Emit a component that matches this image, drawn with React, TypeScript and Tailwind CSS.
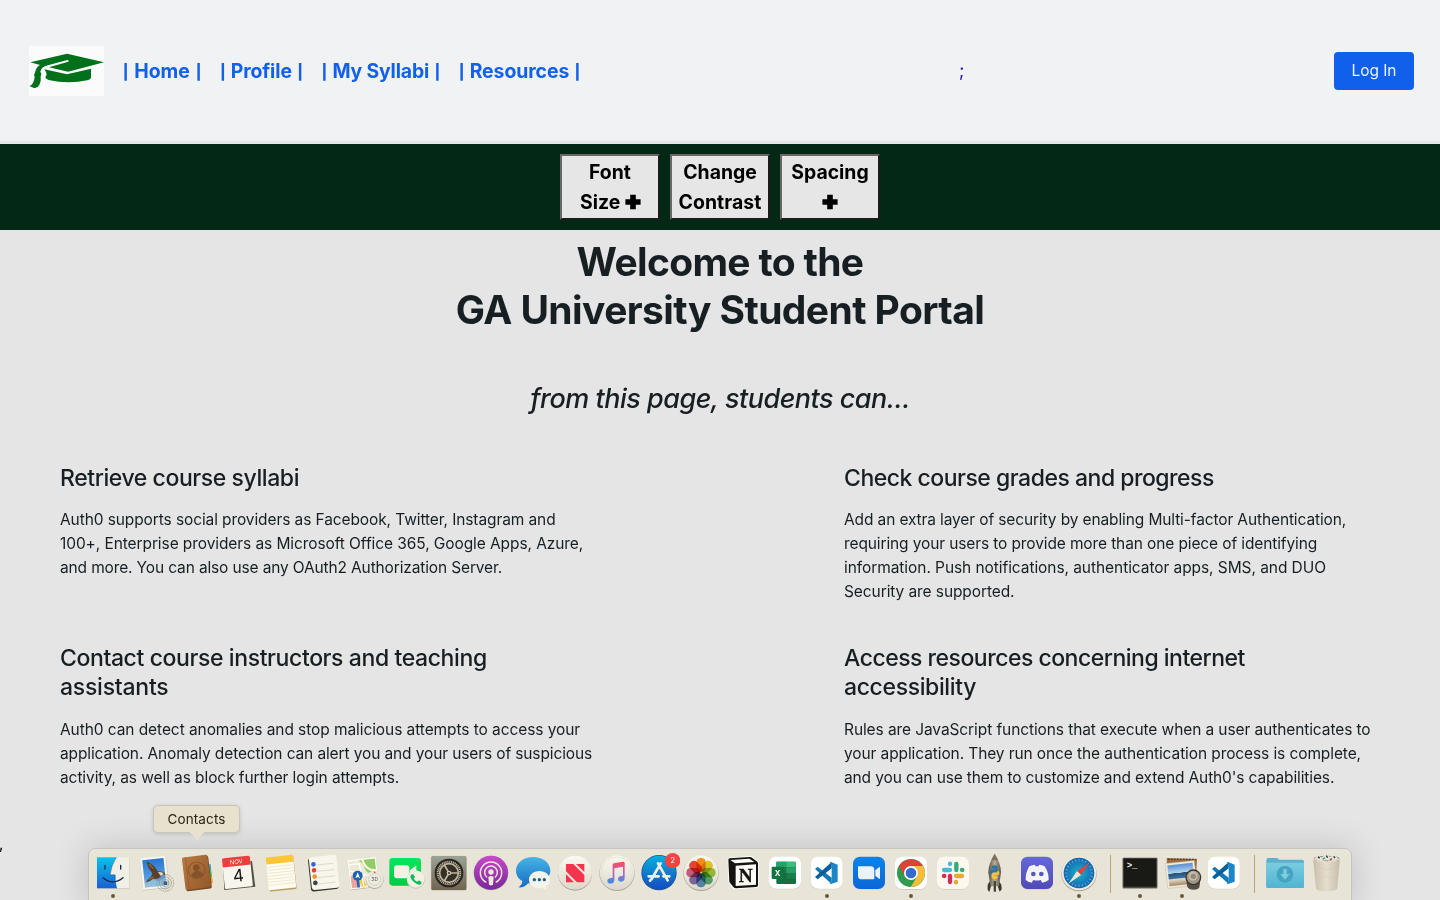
import type { ReactNode } from "react";

type Line = [text: string, tracking: string];

const links: [label: string, width: string, tracking: string][] = [
  ["Home", "w-[78px]", "tracking-[-0.05px]"],
  ["Profile", "w-[82.3px]", "tracking-[-0.12px]"],
  ["My Syllabi", "w-[118.2px]", "tracking-[-0.16px]"],
  ["Resources", "w-[120.8px]", "tracking-[-0.06px]"],
];

const features: { title: Line[]; body: Line[] }[] = [
  {
    title: [["Retrieve course syllabi", "tracking-[-0.42px]"]],
    body: [
      ["Auth0 supports social providers as Facebook, Twitter, Instagram and", "tracking-[-0.1px]"],
      ["100+, Enterprise providers as Microsoft Office 365, Google Apps, Azure,", "tracking-[-0.088px]"],
      ["and more. You can also use any OAuth2 Authorization Server.", "tracking-[-0.14px]"],
    ],
  },
  {
    title: [["Check course grades and progress", "tracking-[-0.49px]"]],
    body: [
      ["Add an extra layer of security by enabling Multi-factor Authentication,", "tracking-[-0.122px]"],
      ["requiring your users to provide more than one piece of identifying", "tracking-[-0.118px]"],
      ["information. Push notifications, authenticator apps, SMS, and DUO", "tracking-[-0.068px]"],
      ["Security are supported.", "tracking-[-0.09px]"],
    ],
  },
  {
    title: [
      ["Contact course instructors and teaching", "tracking-[-0.395px]"],
      ["assistants", "tracking-[-0.24px]"],
    ],
    body: [
      ["Auth0 can detect anomalies and stop malicious attempts to access your", "tracking-[-0.077px]"],
      ["application. Anomaly detection can alert you and your users of suspicious", "tracking-[-0.118px]"],
      ["activity, as well as block further login attempts.", "tracking-[-0.085px]"],
    ],
  },
  {
    title: [
      ["Access resources concerning internet", "tracking-[-0.5px]"],
      ["accessibility", "tracking-[-0.37px]"],
    ],
    body: [
      ["Rules are JavaScript functions that execute when a user authenticates to", "tracking-[-0.093px]"],
      ["your application. They run once the authentication process is complete,", "tracking-[-0.1px]"],
      ["and you can use them to customize and extend Auth0's capabilities.", "tracking-[-0.128px]"],
    ],
  },
];

function Lines({ lines }: { lines: Line[] }) {
  return (
    <>
      {lines.map(([text, tracking]) => (
        <span key={text} className={`block whitespace-nowrap ${tracking}`}>
          {text}
        </span>
      ))}
    </>
  );
}

function Pipe() {
  return <span className="flex w-[5px] justify-center pt-[2px] text-[14.8px] leading-[30px] font-extrabold">|</span>;
}

function Logo() {
  return (
    <svg viewBox="87 48 225 150" className="h-[50px] w-[75px]">
      <rect x="87" y="48" width="225" height="150" fill="#fbfbfb" />
      <path d="M91 97 L201 71 L312 97 L204 125 L147 112 L205 95 Q208 90 202 90 L138 107 Q124 111 121 125 Q127 132 122 139 Q124 152 118 165 Q112 176 102 174 L88 168 Q102 163 104 140 Q100 134 105 128 Q108 111 120 105 Z" fill="#00701a" />
      <path d="M133 118 L201 133 L273 116 V142 Q273 148 262 151 Q203 163 146 150 Q137 147 136 142 L140 134 L138 126 Z" fill="#00701a" />
    </svg>
  );
}

function Plus() {
  return (
    <svg viewBox="0 0 16 16" className="inline-block h-4 w-4 align-[-1px]">
      <path d="M5.2 .7h5.600v4.500H15.600v5.600H10.800v4.500H5.200V10.800H.4V5.200H5.200Z" fill="#000" />
    </svg>
  );
}

function ToolButton({ children }: { children: ReactNode }) {
  return (
    <button className="h-[66px] w-[100px] border-2 border-t-[#6b6767] border-r-[#1c1c1c] border-b-[#1c1c1c] border-l-[#6b6767] bg-[#e6e6e6] text-center text-[19.4px] leading-[30px] font-bold text-black">
      {children}
    </button>
  );
}

function AppIcon({ box, children, running }: { box: string; children: ReactNode; running?: boolean }) {
  return (
    <div className="flex w-[42px] flex-col items-center">
      <svg viewBox={box} className="h-[42px] w-[42px]">
        {children}
      </svg>
      {running && <span className="h-1 w-1 rounded-full bg-[#6b5737]" />}
    </div>
  );
}

function VsCode({ x }: { x: number }) {
  return (
    <g transform={`translate(${x} 0)`}>
      <rect x="0" y="52" width="95" height="96" rx="21" fill="#d3cfc2" />
      <rect x="0" y="50" width="95" height="96" rx="21" fill="#fff" />
      <path d="M12 87 L20 80 L62 113 V132 Z" fill="#1479b8" />
      <path d="M12 111 L20 118 L62 85 V66 Z" fill="#07609c" />
      <path d="M60 66 L80 74 V125 L60 132 L55 129 Q62 130 62 122 V77 Q61 69 55 69 Z" fill="#1c85c6" />
    </g>
  );
}

const petals = ["#f9951f", "#e6cf2c", "#a3c840", "#5db27c", "#5f93c8", "#8a72b4", "#d0638c", "#ee4a38"];
const spokes = [0, 15, 30, 45, 60, 75, 90, 105, 120, 135, 150, 165, 180, 195, 210, 225, 240, 255, 270, 285, 300, 315, 330, 345];

function Defs() {
  return (
    <svg className="absolute h-0 w-0">
      <defs>
        <linearGradient id="finder" x1="0" y1="0" x2="0" y2="1"><stop stopColor="#08c4e8" /><stop offset="1" stopColor="#1b5fd6" /></linearGradient>
        <linearGradient id="sky" x1="0" y1="0" x2="0" y2="1"><stop stopColor="#2476d2" /><stop offset="1" stopColor="#71b0e6" /></linearGradient>
        <linearGradient id="leather" x1="0" y1="0" x2="1" y2="1"><stop stopColor="#b97a42" /><stop offset="1" stopColor="#93592b" /></linearGradient>
        <linearGradient id="green" x1="0" y1="0" x2="0" y2="1"><stop stopColor="#05e75f" /><stop offset="1" stopColor="#06c944" /></linearGradient>
        <linearGradient id="metal" x1="0" y1="0" x2="0" y2="1"><stop stopColor="#9ba296" /><stop offset="1" stopColor="#70644f" /></linearGradient>
        <linearGradient id="purple" x1="0" y1="0" x2="0" y2="1"><stop stopColor="#ca48cc" /><stop offset="1" stopColor="#79279a" /></linearGradient>
        <linearGradient id="bubble" x1="0" y1="0" x2="0" y2="1"><stop stopColor="#47b5e4" /><stop offset="1" stopColor="#146cc4" /></linearGradient>
        <linearGradient id="ivory" x1="0" y1="0" x2="0" y2="1"><stop stopColor="#fbf9f1" /><stop offset="1" stopColor="#ddd8ca" /></linearGradient>
        <linearGradient id="note" x1="0" y1="0" x2="0" y2="1"><stop stopColor="#ff4758" /><stop offset="0.45" stopColor="#c462b4" /><stop offset="1" stopColor="#3292ee" /></linearGradient>
        <linearGradient id="store" x1="0" y1="0" x2="0" y2="1"><stop stopColor="#06b1dd" /><stop offset="1" stopColor="#164bc1" /></linearGradient>
        <linearGradient id="zoom" x1="0" y1="0" x2="0" y2="1"><stop stopColor="#0a84ea" /><stop offset="1" stopColor="#0b67d9" /></linearGradient>
        <linearGradient id="discord" x1="0" y1="0" x2="0" y2="1"><stop stopColor="#6468d8" /><stop offset="1" stopColor="#504ab5" /></linearGradient>
        <radialGradient id="safari"><stop stopColor="#1bb4c5" /><stop offset="1" stopColor="#1265b4" /></radialGradient>
        <linearGradient id="rocket"><stop stopColor="#574f43" /><stop offset="0.5" stopColor="#b7ae9c" /><stop offset="1" stopColor="#5b5347" /></linearGradient>
        <linearGradient id="folder" x1="0" y1="0" x2="0" y2="1"><stop stopColor="#79cce0" /><stop offset="1" stopColor="#52b4d1" /></linearGradient>
        <linearGradient id="bin"><stop stopColor="#c9bfaa" /><stop offset="0.5" stopColor="#e5dece" /><stop offset="1" stopColor="#c7bda8" /></linearGradient>
        <linearGradient id="beach" x1="0" y1="0" x2="0" y2="1"><stop stopColor="#598ed0" /><stop offset="0.4" stopColor="#b4d5ed" /><stop offset="0.42" stopColor="#254f7c" /><stop offset="0.65" stopColor="#3f7195" /><stop offset="0.7" stopColor="#dfddd1" /><stop offset="1" stopColor="#a9835f" /></linearGradient>
      </defs>
    </svg>
  );
}

function Dock() {
  return (
    <div className="absolute top-[848px] left-[88px] flex h-[60px] w-[1264px] items-start rounded-[7px] border border-[#c5c5c4] bg-[#e8e5d8] px-[3px] pt-[3px] font-['Inter',sans-serif] shadow-[0_0_34px_rgba(0,0,0,0.17)]">
      <AppIcon box="36 171 126 126" running>
        <rect x="50" y="188" width="99" height="94" rx="3" fill="#c9c6b9" />
        <rect x="50" y="187" width="98" height="93" rx="2" fill="#f1f0e6" />
        <path d="M51 187 H109 Q94 210 90 239 H106 Q104 262 110 280 H51 Z" fill="url(#finder)" />
        <path d="M109 187 Q94 210 90 240 H105 Q104 262 110 280" fill="none" stroke="#174f86" strokeWidth="1.500" />
        <path d="M69 248 Q98 273 129 248" fill="none" stroke="#0b2c48" strokeWidth="4" strokeLinecap="round" />
        <path d="M75 211v11M122 211v11" stroke="#0b2c48" strokeWidth="4" strokeLinecap="round" />
      </AppIcon>

      <AppIcon box="162 171 126 126">
        <g transform="rotate(-6 223 235)">
          <rect x="184" y="187" width="79" height="96" fill="#bdb7a7" />
          <rect x="184" y="185" width="78" height="96" fill="#f7f5ec" stroke="#d5cfbe" strokeDasharray="3 3" />
          <rect x="191" y="192" width="64" height="82" fill="url(#sky)" />
          <path d="M191 258l22-9 20 12 22-10v23h-64Z" fill="#a9cbdc" opacity=".6" />
          <path d="M203 198l9 4 13 12 9 16 12 2 8 5 2 7-12-2-4 7-8 3-14-1-9 5-15 4 7-8 12-9 4-9-9-15Z" fill="#5a3f2a" />
          <path d="M234 232l12 2 5 7-10 3Z" fill="#e2dbc5" />
          <path d="M210 206l12 15M205 252l14-7" stroke="#a9723d" strokeWidth="3" />
        </g>
        <g fill="none" stroke="#8e8d85" strokeWidth="2.500" opacity=".85"><circle cx="256" cy="264" r="25" strokeDasharray="5 2" /><circle cx="256" cy="264" r="18" /><circle cx="256" cy="264" r="11" /></g>
        <path d="M251 259h11v11h-11Z" fill="#315c87" />
      </AppIcon>

      <AppIcon box="288 171 126 126">
        <path d="M382 209l10-2 2 20-10 2Z" fill="#3faab9" /><path d="M384 229l10-1 2 18-10 2Z" fill="#4db44a" /><path d="M386 248l11-1 1 17-10 4Z" fill="#f1992e" />
        <g transform="rotate(-7 350 233)">
          <rect x="313" y="187" width="77" height="98" rx="5" fill="#754620" />
          <rect x="311" y="183" width="77" height="98" rx="5" fill="url(#leather)" />
          <path d="M322 184v97" stroke="#8c552b" strokeWidth="2" />
          <g fill="none" stroke="#8a5729" strokeWidth="3"><circle cx="351" cy="226" r="25" /></g>
          <circle cx="351" cy="218" r="10" fill="#84522a" />
          <path d="M333 242q3-14 18-14t18 14q-18 14-36 0Z" fill="#84522a" />
        </g>
      </AppIcon>

      <AppIcon box="414 171 126 126">
        <path d="M429 203l4 82 93-10-10-77Z" fill="#545047" />
        <g transform="rotate(-6 472 230)">
          <rect x="430" y="187" width="84" height="91" rx="4" fill="#f7f5ec" />
          <path d="M430 191q0-5 5-5h74q5 0 5 5v22h-84Z" fill="#ed3d3d" />
          <text x="472" y="206" textAnchor="middle" fontSize="18" fill="#fff0e9">NOV</text>
          <text x="474" y="260" textAnchor="middle" fontSize="51" fill="#151515">4</text>
        </g>
      </AppIcon>

      <AppIcon box="540 171 126 126">
        <g transform="rotate(-6 604 234)">
          <rect x="564" y="187" width="81" height="99" rx="3" fill="#b79b61" />
          <rect x="562" y="184" width="82" height="98" rx="3" fill="#fffcee" />
          <path d="M562 186q0-3 3-3h76q3 0 3 3v18h-82Z" fill="#fbc638" />
          <path d="M564 213h78m-78 9h78m-78 9h78m-78 9h78m-78 9h78m-78 9h78m-78 9h78" stroke="#e3ddc9" strokeWidth="2" />
        </g>
      </AppIcon>

      <AppIcon box="666 171 126 126">
        <g transform="rotate(-6 730 233)">
          <rect x="688" y="186" width="84" height="100" rx="9" fill="#37352f" />
          <rect x="691" y="183" width="83" height="99" rx="8" fill="#f8f6eb" />
          <path d="M712 208h52m-52 19h52m-52 19h52m-52 19h52" stroke="#d1cdbf" strokeWidth="2" />
          <circle cx="703" cy="205" r="7" fill="#2b65d8" /><circle cx="703" cy="223" r="7" fill="#ec3c38" /><circle cx="703" cy="242" r="7" fill="#ef9330" /><circle cx="703" cy="261" r="7" fill="#434343" />
        </g>
      </AppIcon>

      <AppIcon box="12 36 126 126">
        <g transform="rotate(-7 69 100)">
          <rect x="27" y="58" width="86" height="88" fill="#b9b4a5" />
          <rect x="27" y="56" width="86" height="88" fill="#fffdf2" />
          <rect x="31" y="60" width="78" height="80" fill="#eee8d5" />
          <path d="M60 60h49v46q-30-2-33-20t-16-26" fill="#8fcd68" />
          <path d="M72 60q6 34 37 35" fill="none" stroke="#fff6df" strokeWidth="7" />
          <path d="M31 105h24v35H31Z" fill="#f1a1a2" />
          <path d="M60 108q1 18 10 32" fill="none" stroke="#f7c748" strokeWidth="13" />
          <path d="M31 87l34 18 44 5M31 70h30l6 70" fill="none" stroke="#fff" strokeWidth="4" />
          <path d="M51 110v30" stroke="#2368b0" strokeWidth="8" />
        </g>
        <circle cx="53" cy="107" r="15" fill="#1b65b6" /><path d="M53 97l-7 18 7-4 7 4Z" fill="#fff" />
        <circle cx="104" cy="120" r="27" fill="#aaa59a" /><circle cx="104" cy="118" r="26" fill="#edeade" /><circle cx="104" cy="118" r="18" fill="none" stroke="#aaa79c" strokeWidth="2" strokeDasharray="3 2" />
        <text x="104" y="124" textAnchor="middle" fontSize="15" fill="#555">3D</text><path d="M104 93l-3 6h6Z" fill="#e44a3d" />
      </AppIcon>

      <AppIcon box="138 36 126 126">
        <rect x="148" y="54" width="95" height="83" rx="10" fill="url(#green)" />
        <rect x="162" y="76" width="46" height="39" rx="9" fill="#f5f2e5" /><path d="M210 91l17-14q2-1 2 2v30l-19-9Z" fill="#edf3df" />
        <circle cx="227" cy="119" r="27" fill="#c6bfb0" /><circle cx="227" cy="117" r="26" fill="#f3efe3" />
        <path d="M213 104l6-2 6 9-4 5q5 7 12 9l4-4 8 6-2 6q-9 4-22-8-14-13-8-21Z" fill="#08bd55" />
      </AppIcon>

      <AppIcon box="264 36 126 126">
        <rect x="274" y="49" width="105" height="101" rx="4" fill="url(#metal)" stroke="#77705e" strokeWidth="1" />
        <circle cx="327" cy="99" r="43" fill="#26241f" />
        <circle cx="327" cy="99" r="34" fill="none" stroke="#c0b79f" strokeWidth="6" strokeDasharray="3.500 2.200" />
        <circle cx="327" cy="99" r="28" fill="#342f27" stroke="#c0b79f" strokeWidth="5" />
        <path d="M327 99H355M327 99L313 75M327 99L313 123" stroke="#c0b79f" strokeWidth="5" /><circle cx="327" cy="99" r="7" fill="#cfc4ab" /><circle cx="327" cy="99" r="3" fill="#37322a" />
      </AppIcon>

      <AppIcon box="390 36 126 126">
        <circle cx="453" cy="99" r="52" fill="#a0a08f" /><circle cx="453" cy="98" r="51" fill="url(#purple)" />
        <g fill="none" stroke="#f1e6d7" strokeWidth="4.500" strokeLinecap="round"><path d="M437 126a32 32 0 1 1 32 0M440 111a19 19 0 1 1 26 0" /></g>
        <circle cx="453" cy="96" r="8" fill="#f3eadc" /><path d="M445 111q8-6 16 0l-2 22q-6 7-12 0Z" fill="#f3eadc" />
      </AppIcon>

      <AppIcon box="516 36 126 126">
        <path d="M579 51C550 51 528 69 528 92c0 14 8 25 19 31-1 11-6 14-12 19 16 2 24-6 29-12 38 6 67-13 67-38 0-24-23-41-52-41Z" fill="url(#bubble)" />
        <path d="M598 93c-18 0-31 11-31 26s13 26 31 26l11-1c4 5 9 6 12 5-4-4-4-7-3-10 7-5 12-11 12-20 0-15-14-26-32-26Z" fill="#f4f3ec" />
        <circle cx="583" cy="119" r="5" fill="#195f91" /><circle cx="598" cy="119" r="5" fill="#195f91" /><circle cx="613" cy="119" r="5" fill="#195f91" />
      </AppIcon>

      <AppIcon box="642 36 126 126">
        <circle cx="705" cy="101" r="51" fill="#aaa498" /><circle cx="705" cy="98" r="51" fill="url(#ivory)" />
        <path d="M678 72h22l33 33v22h-22l-33-33Z M708 72h25v24Z M678 103v24h24Z" fill="#f4344d" />
      </AppIcon>

      <AppIcon box="3 36 126 126">
        <circle cx="66" cy="100" r="53" fill="#aaa498" /><circle cx="66" cy="98" r="52" fill="url(#ivory)" /><circle cx="66" cy="98" r="47" fill="none" stroke="#ded9cb" strokeWidth="2" />
        <path d="M53 75q0-4 4-5l28-5q4 0 4 4v45q0 10-10 11-10 0-10-8t11-9l4-1V80L58 85v35q0 10-10 11-11 0-11-8t12-9l4-1Z" fill="url(#note)" />
      </AppIcon>

      <AppIcon box="129 36 126 126">
        <circle cx="192" cy="98" r="53" fill="#1758a4" /><circle cx="192" cy="97" r="50" fill="url(#store)" />
        <path d="M197 70l-27 47M189 70l29 51M161 109h30m14 0h18M167 119l-2 3" fill="none" stroke="#f0eee3" strokeWidth="8" strokeLinecap="round" />
        <circle cx="233" cy="62" r="23" fill="#f24440" /><text x="233" y="70" textAnchor="middle" fontSize="22" fill="#fff">2</text>
      </AppIcon>

      <AppIcon box="255 36 126 126">
        <circle cx="318" cy="100" r="53" fill="#a8a495" /><circle cx="318" cy="98" r="52" fill="url(#ivory)" />
        {petals.map((color, i) => (
          <rect key={color} x="304" y="54" width="28" height="42" rx="13" fill={color} className="mix-blend-multiply" transform={`rotate(${i * 45} 318 98)`} />
        ))}
      </AppIcon>

      <AppIcon box="381 36 126 126">
        <path d="M398 59q0-5 5-6l62-5q5 0 9 3l14 12q3 3 3 7v68q0 5-5 5l-65 5q-5 0-8-4l-13-18Z" fill="#fff" />
        <path d="M400 60q0-4 4-5l60-4q5 0 8 3l13 10q4 3 4 7v65q0 5-5 5l-61 4q-5 0-8-4l-12-15Z" fill="#151411" />
        <path d="M406 60l57-4 15 10-58 4Z M422 77l61-4v61l-61 4Z" fill="#fdfcf5" />
        <text x="452" y="126" textAnchor="middle" fontFamily="Liberation Serif, serif" fontSize="58" fontWeight="700" fill="#151411" stroke="#151411">N</text>
      </AppIcon>

      <AppIcon box="507 36 126 126">
        <rect x="522" y="52" width="96" height="96" rx="21" fill="#d3cfc2" /><rect x="522" y="50" width="96" height="96" rx="21" fill="#fff" />
        <rect x="544" y="65" width="59" height="67" rx="4" fill="#176c42" /><path d="M544 65h30v17h-30Z" fill="#24a268" /><path d="M574 65h25q4 0 4 4v13h-29Z" fill="#3cbd79" /><path d="M544 82h30v17h-30Z" fill="#177a49" /><path d="M574 82h29v17h-29Z" fill="#269f65" /><path d="M574 99h29v17h-29Z" fill="#197d4c" />
        <rect x="530" y="80" width="36" height="37" rx="3" fill="#107541" /><text x="548" y="107" textAnchor="middle" fontSize="23" fontWeight="700" fill="#fff">X</text>
      </AppIcon>

      <AppIcon box="633 36 126 126" running><VsCode x={648} /></AppIcon>

      <AppIcon box="-6 36 126 126">
        <rect x="9" y="52" width="96" height="96" rx="21" fill="#b9c1bd" /><rect x="9" y="50" width="96" height="97" rx="21" fill="url(#zoom)" />
        <path d="M24 82q0-3 3-3h35q11 0 11 11v25q0 3-3 3H35q-11 0-11-11Z M76 91l11-9q3-2 3 2v30q0 4-3 2l-11-9Z" fill="#edf3fb" />
      </AppIcon>

      <AppIcon box="120 36 126 126" running>
        <rect x="135" y="53" width="96" height="96" rx="21" fill="#c9c4b6" /><rect x="135" y="50" width="96" height="97" rx="21" fill="#fff" />
        <circle cx="183" cy="99" r="42" fill="#309b4d" />
        <path d="M183 99L147 78A42 42 0 0 1 219 78H183Z" fill="#dc4336" />
        <path d="M183 78h36A42 42 0 0 1 182 141l19-31Z" fill="#f5bd39" />
        <path d="M147 78l18 31 18-31Z" fill="#dc4336" />
        <circle cx="183" cy="99" r="21" fill="#fff" /><circle cx="183" cy="99" r="16" fill="#336cd1" />
      </AppIcon>

      <AppIcon box="246 36 126 126">
        <rect x="261" y="53" width="96" height="96" rx="21" fill="#d0cbbd" /><rect x="261" y="50" width="96" height="97" rx="21" fill="#faf8ef" />
        <g strokeWidth="13" strokeLinecap="round">
          <path d="M282 90h18M300 71v1" stroke="#45bcd6" /><path d="M319 72v18M336 90h1" stroke="#36ab79" /><path d="M318 108h18M318 126v1" stroke="#e5a935" /><path d="M300 108v18M282 108h1" stroke="#d8295b" />
        </g>
      </AppIcon>

      <AppIcon box="372 36 126 126">
        <path d="M418 125l-5 10v14l5 7 5-18h20l6 17 6-7-1-14-7-10Z" fill="#3b342d" />
        <path d="M434 41q-19 31-19 56l6 42h26l6-42q0-25-19-56Z" fill="url(#rocket)" />
        <path d="M434 41q-6 9-10 20h20q-4-11-10-20Z" fill="#80705b" />
        <path d="M425 82q0-6 9-6t9 6v10q0 5-6 5h-5q-7 0-7 6-5-2-5-8t5-7h9v-2h-9Z" fill="#3274a0" />
        <path d="M443 92q5 0 5 7t-5 7h-9v2h9v3q0 6-9 6t-9-6v-8q0-5 6-5h6q6 0 6-6Z" fill="#f1c243" />
        <path d="M431 123h7v32h-7Z" fill="#4a4137" />
      </AppIcon>

      <AppIcon box="498 36 126 126">
        <rect x="513" y="52" width="96" height="96" rx="20" fill="#b0abb6" /><rect x="513" y="50" width="96" height="97" rx="20" fill="url(#discord)" />
        <path d="M538 79q9-5 16-5l3 5q4-1 8 0l3-5q8 0 16 5 13 20 12 41-9 7-19 8l-5-8q-11 3-22 0l-5 8q-11-2-18-8-1-22 11-41Z" fill="#f4f3f6" />
        <circle cx="550" cy="102" r="7" fill="#5757c0" /><circle cx="574" cy="102" r="7" fill="#5757c0" />
      </AppIcon>

      <AppIcon box="624 36 126 126" running>
        <circle cx="687" cy="101" r="53" fill="#aaa391" /><circle cx="687" cy="99" r="52" fill="#eeebde" /><circle cx="687" cy="99" r="46" fill="url(#safari)" />
        {spokes.map((angle) => (
          <path key={angle} d="M687 57v7" stroke="#c1dce0" strokeWidth="1.500" transform={`rotate(${angle} 687 99)`} />
        ))}
        <path d="M719 68l-38 25 12 12Z" fill="#ec3e3b" /><path d="M655 131l26-38 12 12Z" fill="#eee7d8" />
      </AppIcon>

      <div className="flex w-[19px] pt-[3px] pl-[10px]"><span className="h-[38px] w-px bg-[#b8a676]" /></div>

      <AppIcon box="57 36 126 126" running>
        <rect x="68" y="55" width="104" height="92" rx="3" fill="#aaa596" /><rect x="68" y="53" width="104" height="91" rx="3" fill="#514e48" /><rect x="71" y="56" width="98" height="84" fill="#191916" />
        <text x="80" y="83" fontFamily="Liberation Mono, monospace" fontSize="27" fontWeight="700" fill="#f0eee4">&gt;_</text>
      </AppIcon>

      <AppIcon box="183 36 126 126" running>
        <path d="M200 54l91 3-4 63-84 2Z" fill="#996b3f" /><path d="M204 58h83" stroke="#543a25" strokeWidth="4" strokeDasharray="5 4" />
        <g transform="rotate(-6 243 103)"><rect x="199" y="66" width="88" height="75" fill="#eeeadc" stroke="#aaa28f" /><rect x="205" y="72" width="76" height="63" fill="url(#beach)" /></g>
        <path d="M258 112l3 25q3 12 20 12t18-12l3-28Z" fill="#574d44" />
        <circle cx="280" cy="112" r="22" fill="#9e9688" stroke="#38342f" strokeWidth="4" /><circle cx="279" cy="108" r="14" fill="#c5b9a5" /><circle cx="280" cy="109" r="8" fill="#96897a" />
      </AppIcon>

      <AppIcon box="309 36 126 126"><VsCode x={324} /></AppIcon>

      <div className="flex w-[19px] justify-center pt-[3px]"><span className="h-[38px] w-px bg-[#b8a676]" /></div>

      <AppIcon box="492 36 126 126">
        <path d="M499 60q0-6 6-6h25q4 0 8 5h68q6 0 6 6v75q0 4-4 4H503q-4 0-4-4Z" fill="#5cb2cd" /><path d="M499 68h113v72q0 3-4 3H503q-4 0-4-3Z" fill="url(#folder)" />
        <circle cx="555" cy="103" r="25" fill="#45a4bf" /><path d="M550 87h10v15h9l-14 17-14-17h9Z" fill="#80cde0" />
      </AppIcon>

      <AppIcon box="618 36 126 126">
        <path d="M639 57h81l-8 88q-1 9-32 9t-32-9Z" fill="url(#bin)" />
        <ellipse cx="680" cy="56" rx="39" ry="9" fill="#8c8779" />
        <path d="M643 56l10-9 12 5 12-8 13 6 14-4 12 11-18 6-17-2-20 2Z" fill="#e9e5dc" />
        <path d="M654 50l5 5m20-8l4 6m18-4l4 5" stroke="#2b2926" strokeWidth="4" /><path d="M668 58l7-5" stroke="#43a991" strokeWidth="5" /><path d="M690 60l6-4" stroke="#ae4e3c" strokeWidth="5" />
        <path d="M654 80l24 11 28-9M652 118l22-11 24 9" fill="none" stroke="#cdc3ae" strokeWidth="2" opacity=".6" />
        <path d="M639 57q41 17 81 0" fill="none" stroke="#f4efdf" strokeWidth="2.500" />
      </AppIcon>
    </div>
  );
}

export default function App() {
  return (
    <div className="relative h-[900px] w-[1440px] overflow-hidden bg-[#e5e5e5] font-['Inter',sans-serif] text-[#181f23]">
      <Defs />
      <header className="flex h-[144px] items-center border-b-[3px] border-[#e4e5e5] bg-[#f0f2f4] pr-[26px] pl-[29px]">
        <Logo />
        <nav className="ml-[19px] flex h-[30px] gap-[19.2px] text-[19.4px] leading-[30px] font-bold whitespace-nowrap text-[#1260ec]">
          {links.map(([label, width, tracking]) => (
            <a key={label} className={`flex items-center justify-between ${width} ${tracking}`}>
              <Pipe />
              {label}
              <Pipe />
            </a>
          ))}
        </nav>
        <span className="ml-auto w-[375px] text-[18px] leading-6 text-[#2113c8]">;</span>
        <button className="h-[38px] w-20 rounded-[4px] bg-[#1060ec] text-[15.5px] tracking-[-0.05px] text-[#edf3fc]">Log In</button>
      </header>

      <div className="flex h-[86px] items-start justify-center gap-[10px] bg-[#032816] pt-[10px]">
        <ToolButton>Font<br /><span className="ml-px">Size</span> <Plus /></ToolButton>
        <ToolButton>Change<br /><span className="-mx-2 tracking-[0.07px]">Contrast</span></ToolButton>
        <ToolButton>Spacing<br /><Plus /></ToolButton>
      </div>

      <main>
        <h1 className="pt-2 text-center text-[39px] leading-[48px] font-bold">
          <span className="block tracking-[-0.67px]">Welcome to the</span>
          <span className="block tracking-[-0.58px]">GA University Student Portal</span>
        </h1>
        <p className="mt-[49px] text-center text-[27px] leading-8 font-medium tracking-[-0.5px] italic">from this page, students can...</p>
        <div className="mt-[49px] grid grid-cols-[784px_1fr] gap-y-10 pl-[60px]">
          {features.map(({ title, body }) => (
            <section key={title[0][0]}>
              <h6 className="text-[23px] leading-[28.8px] font-medium"><Lines lines={title} /></h6>
              <p className="mt-[15.6px] text-[15.5px] leading-6"><Lines lines={body} /></p>
            </section>
          ))}
        </div>
      </main>

      <span className="absolute top-[832px] left-[-1px] text-[15.500px] leading-6 text-black">,</span>
      <Dock />
      <div className="absolute top-[805px] left-[153px] flex h-7 w-[87px] items-center justify-center rounded-[5px] border border-[#c9c5b8] bg-[#e8e1cd] text-[13.5px] tracking-[0.12px] text-[#2b2415] shadow-[0_1px_4px_rgba(0,0,0,0.15)]">
        Contacts
        <svg viewBox="0 0 16 9" className="absolute top-[26px] left-[35px] h-[9px] w-4"><path d="M0 0h16Q13 1 8 8.500 3 1 0 0Z" fill="#e8e1cd" /></svg>
      </div>
    </div>
  );
}
